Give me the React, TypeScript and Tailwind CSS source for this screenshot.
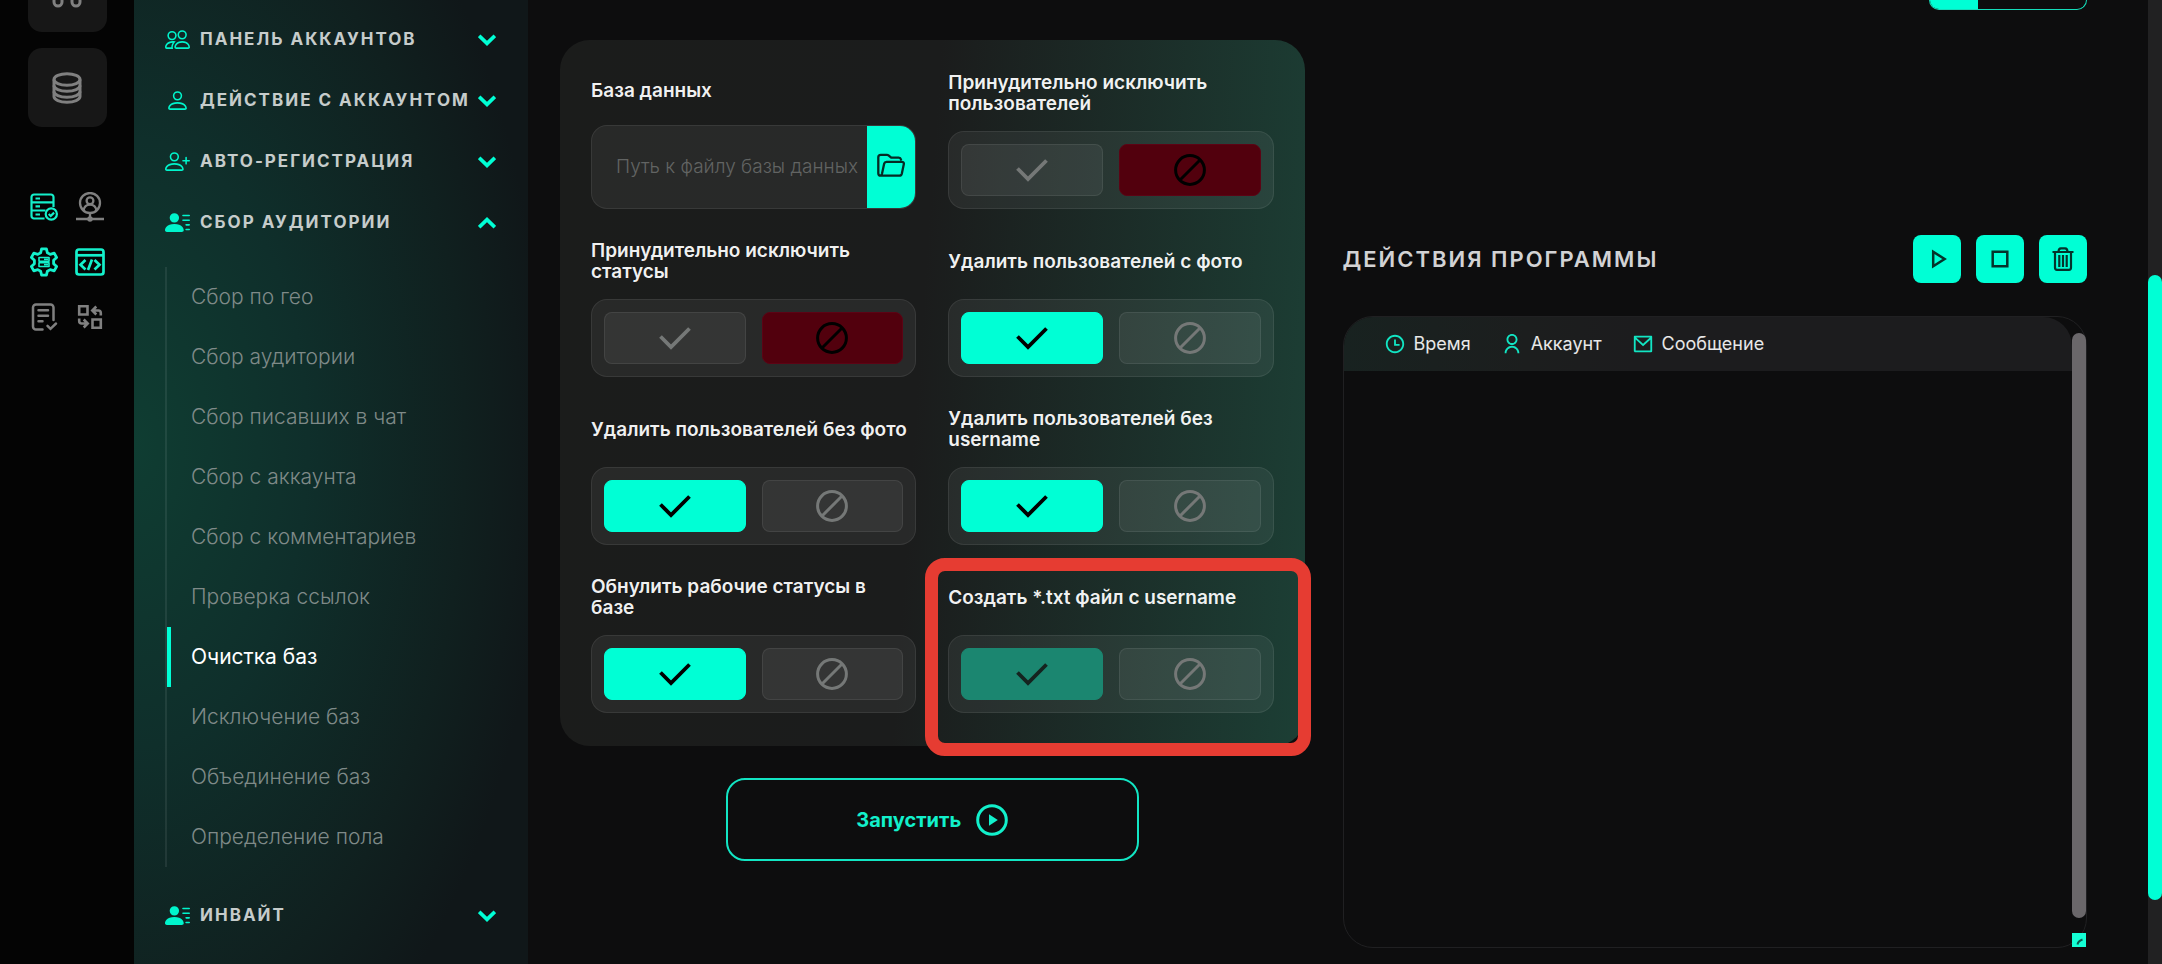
import { useState } from 'react';
import type { ReactNode } from 'react';
import { BsPeople, BsPerson, BsPersonLinesFill, BsPersonPlus } from 'react-icons/bs';
import { RiMailLine, RiTimeLine, RiUserLine } from 'react-icons/ri';
import clsx from 'clsx';

type ToggleState = 'yes' | 'no';

interface FieldItem {
  id: string;
  label: string;
  value: ToggleState;
  muted?: boolean;
}

const AUDIENCE_LINKS = [
  'Сбор по гео',
  'Сбор аудитории',
  'Сбор писавших в чат',
  'Сбор с аккаунта',
  'Сбор с комментариев',
  'Проверка ссылок',
  'Очистка баз',
  'Исключение баз',
  'Объединение баз',
  'Определение пола',
];

const FIELDS: FieldItem[] = [
  { id: 'exclude-users', label: 'Принудительно исключить\nпользователей', value: 'no' },
  { id: 'exclude-statuses', label: 'Принудительно исключить\nстатусы', value: 'no' },
  { id: 'with-photo', label: 'Удалить пользователей с фото', value: 'yes' },
  { id: 'no-photo', label: 'Удалить пользователей без фото', value: 'yes' },
  { id: 'no-username', label: 'Удалить пользователей без\nusername', value: 'yes' },
  { id: 'reset-statuses', label: 'Обнулить рабочие статусы в\nбазе', value: 'yes' },
  { id: 'txt-file', label: 'Создать *.txt файл с username', value: 'yes', muted: true },
];

/* ---------- icons ---------- */

function CheckIcon() {
  return (
    <svg viewBox="0 0 32 24" className="h-6 w-8" fill="none" stroke="currentColor" strokeWidth="3.8">
      <path d="M1.5 10.5 12 21 30.5 2.5" />
    </svg>
  );
}

function BanIcon() {
  return (
    <svg viewBox="0 0 32 32" className="size-8" fill="none" stroke="currentColor" strokeWidth="3">
      <circle cx="16" cy="16" r="14.4" />
      <path d="M6 26 26 6" />
    </svg>
  );
}

function Chevron({ up }: { up?: boolean }) {
  return (
    <svg viewBox="0 0 18 12" className="h-3 w-[18px] shrink-0 text-[#00ffd5]" fill="none" stroke="currentColor" strokeWidth="3.6">
      <path d={up ? 'M1.2 10.2 9 2.6l7.8 7.6' : 'M1.2 1.8 9 9.4l7.8-7.6'} />
    </svg>
  );
}

function DatabaseIcon() {
  return (
    <svg viewBox="0 0 30 32" className="h-8 w-[30px]" fill="none" stroke="currentColor" strokeWidth="3">
      <ellipse cx="15" cy="7.5" rx="13" ry="5.7" />
      <path d="M2 7.500v17c0 3.200 5.800 5.700 13 5.700s13-2.500 13-5.700v-17" />
      <path d="M2 13.500c0 3.200 5.800 5.700 13 5.700s13-2.500 13-5.700M2 19.500c0 3.200 5.800 5.700 13 5.700s13-2.500 13-5.700" />
    </svg>
  );
}

function ServerCheckIcon() {
  return (
    <svg viewBox="0 0 28 28" className="size-7" fill="none" stroke="currentColor" strokeWidth="2.200">
      <path d="M14.500 25.500H4a2.500 2.500 0 0 1-2.500-2.500V4A2.500 2.500 0 0 1 4 1.500h17A2.500 2.500 0 0 1 23.500 4v10" />
      <path d="M1.500 9.300h22M1.500 17.500h14" />
      <path d="M5.500 5.500H10M5.500 13.400H10M5.500 21.500H10" strokeWidth="2.200" />
      <circle cx="21.300" cy="21" r="5.600" />
      <path d="m18.700 21 2 2 3.400-3.400" />
    </svg>
  );
}

function NetworkUserIcon() {
  return (
    <svg viewBox="0 0 30 30" className="size-[30px]" fill="none" stroke="currentColor" strokeWidth="2.300">
      <circle cx="15" cy="11" r="10" />
      <circle cx="15" cy="8.800" r="3.400" />
      <path d="M8.500 18.400c.6-3.600 3.300-5.800 6.500-5.800s5.900 2.200 6.500 5.800M15 21v4.500M1 27h28" />
      <circle cx="15" cy="27" r="1.600" fill="currentColor" />
    </svg>
  );
}

function GearIcon() {
  return (
    <svg viewBox="0 0 28 30" className="h-[30px] w-7" fill="none" stroke="currentColor" strokeWidth="2.800" strokeLinejoin="round">
      <path d="M11.600 1.800h4.800l1 4 2.800 1.600 4-1.200 2.400 4.200-3 2.900v3.400l3 2.900-2.400 4.200-4-1.200-2.800 1.600-1 4h-4.800l-1-4-2.800-1.600-4 1.200-2.400-4.200 3-2.900v-3.400l-3-2.900 2.400-4.200 4 1.200 2.800-1.600z" />
      <path d="M9 10.500h10v3.800H9zM9 15.700h10v3.800H9z" strokeWidth="1.600" />
      <path d="M14 12.400h4M14 17.600h4" strokeWidth="1.600" />
    </svg>
  );
}

function CodeWindowIcon() {
  return (
    <svg viewBox="0 0 30 28" className="h-7 w-[30px]" fill="none" stroke="currentColor" strokeWidth="2.700">
      <rect x="1.500" y="1.500" width="27" height="25" rx="2.500" />
      <path d="M1.500 7.300h27" />
      <path d="m10.500 12-5 4.700 5 4.700M19.500 12l5 4.700-5 4.700M17 11.500l-4 10.500" />
    </svg>
  );
}

function DocCheckIcon() {
  return (
    <svg viewBox="0 0 28 28" className="size-7" fill="none" stroke="currentColor" strokeWidth="2.500" strokeLinecap="round">
      <path d="M12.500 26.500H6A3 3 0 0 1 3 23.500V4.500a3 3 0 0 1 3-3h14.500a3 3 0 0 1 3 3V17" />
      <path d="M8.500 7.300h9.500M8.500 12.800h9.500M8.500 18.300h4M17.500 22.800l3 3 5.500-5.300" />
    </svg>
  );
}

function SwapIcon() {
  return (
    <svg viewBox="0 0 28 28" className="size-7" fill="none" stroke="currentColor" strokeWidth="2.600">
      <path d="M3.200 3.200h8.300v8.300H3.200zM16.500 16.500h8.300v8.300h-8.300z" />
      <path d="M24.800 12.500V10a2.500 2.500 0 0 0-2.500-2.500h-5M20.300 3.500l-4 4 4 4M3.200 15.500V18a2.500 2.500 0 0 0 2.500 2.500h5M7.700 16.500l4 4-4 4" />
    </svg>
  );
}

function FolderIcon() {
  return (
    <svg viewBox="0 0 28 24" className="mb-1 h-6 w-7" fill="none" stroke="currentColor" strokeWidth="2.300" strokeLinejoin="round" strokeLinecap="round">
      <path d="M24 6.500c-.3-1.200-1-1.800-2.300-1.800h-7.500l-2.700-2.300c-.5-.4-1-.6-1.600-.6H3.800C2.300 1.800 1.300 2.800 1.300 4.200v16c0 1.600 1 2.500 2.500 2.500h18.500c1.400 0 2.200-.8 2.500-2l2-9.400c.3-1.500-.5-2.500-2-2.500H9.500c-1.300 0-2 .6-2.300 1.800L5 20.800c-.3 1.200-.8 1.900-1.700 1.900" />
    </svg>
  );
}

function TrashIcon() {
  return (
    <svg viewBox="0 0 22 24" className="h-6 w-[22px]" fill="none" stroke="currentColor" strokeWidth="2.200">
      <path d="M0.500 5h21M6.500 5c0-2.400.8-3.600 2.400-3.600h4.200c1.600 0 2.400 1.200 2.400 3.600M3 5v15.500C3 22 3.800 22.800 5 22.800h12c1.200 0 2-.8 2-2.300V5" />
      <path d="M7.300 8v12M11 8v12M14.700 8v12" />
    </svg>
  );
}

/* ---------- building blocks ---------- */

function MenuGroup({ icon, title, open }: { icon: ReactNode; title: string; open?: boolean }) {
  return (
    <button
      type="button"
      aria-expanded={!!open}
      className="flex h-[61px] w-full items-center justify-between pl-[31px] pr-8 text-left"
    >
      <span className="flex items-center gap-2.5">
        <span className="flex w-[25px] shrink-0 justify-center text-[25px] text-[#00f5cc]">{icon}</span>
        <span className="whitespace-nowrap text-[17px] font-bold tracking-[2px] text-[#c6cccb]">{title}</span>
      </span>
      <Chevron up={open} />
    </button>
  );
}

function Toggle({ field }: { field: FieldItem }) {
  const [value, setValue] = useState<ToggleState>(field.value);
  const yes = value === 'yes';

  return (
    <div
      role="group"
      aria-labelledby={field.id}
      className="grid h-[78px] grid-cols-2 gap-4 rounded-2xl border border-white/8 bg-white/6 p-3"
    >
      <button
        type="button"
        aria-label="Да"
        aria-pressed={yes}
        onClick={() => setValue('yes')}
        className={clsx(
          'flex items-center justify-center rounded-lg border',
          yes && !field.muted && 'border-[#00ffd5] bg-[#00ffd5] text-black',
          yes && field.muted && 'border-[#1b8670] bg-[#1b8670] text-[#15231f]',
          !yes && 'border-white/8 bg-white/6 text-[#757877]',
        )}
      >
        <CheckIcon />
      </button>
      <button
        type="button"
        aria-label="Нет"
        aria-pressed={!yes}
        onClick={() => setValue('no')}
        className={clsx(
          'flex items-center justify-center rounded-lg border',
          yes ? 'border-white/8 bg-white/6 text-[#757877]' : 'border-[#5c0314] bg-[#52000d] text-black',
        )}
      >
        <BanIcon />
      </button>
    </div>
  );
}

function Field({ field }: { field: FieldItem }) {
  return (
    <div className="relative flex flex-col gap-[17px]">
      <div id={field.id} className="flex flex-1 items-center whitespace-pre-line text-[19px]/[21px] font-semibold text-white/95">
        {field.label}
      </div>
      <Toggle field={field} />
      {field.muted && (
        <div className="pointer-events-none absolute -bottom-[43px] -left-[23px] -right-[37px] -top-[18px] rounded-[20px] border-[13px] border-[#e63c32]" />
      )}
    </div>
  );
}

function DatabaseField() {
  return (
    <div className="flex flex-col gap-[17px]">
      <label htmlFor="db-path" className="flex flex-1 items-center text-[19px]/[21px] font-semibold text-white/95">
        База данных
      </label>
      <div className="flex h-[84px] overflow-hidden rounded-2xl border border-white/8 bg-white/6">
        <input
          id="db-path"
          type="text"
          placeholder="Путь к файлу базы данных"
          className="min-w-0 flex-1 bg-transparent pl-6 text-[19px] font-light text-white outline-none placeholder:text-[#626463]"
        />
        <button type="button" aria-label="Открыть файл" className="flex w-12 items-center justify-center bg-[#00ffd5] text-[#062b24]">
          <FolderIcon />
        </button>
      </div>
    </div>
  );
}

/* ---------- sections ---------- */

function Rail() {
  return (
    <aside className="flex w-[134px] shrink-0 flex-col items-center bg-[#040404] text-[#808080]">
      <button type="button" aria-label="Аккаунты" className="flex h-8 w-[79px] justify-center rounded-b-[14px] bg-[#171717]">
        <svg viewBox="0 0 30 8" className="h-2 w-[30px]" fill="none" stroke="currentColor" strokeWidth="3">
          <path d="M2 0v2a4 4 0 0 0 8 0V0M20 0v2a4 4 0 0 0 8 0V0" />
        </svg>
      </button>
      <button type="button" aria-label="Базы" className="mt-4 flex size-[79px] items-center justify-center rounded-[14px] bg-[#171717]">
        <DatabaseIcon />
      </button>
      <div className="mt-[65px] grid grid-cols-2 gap-x-4 gap-y-[25px]">
        {[
          { icon: <ServerCheckIcon />, label: 'Серверы', active: true },
          { icon: <NetworkUserIcon />, label: 'Прокси' },
          { icon: <GearIcon />, label: 'Настройки', active: true },
          { icon: <CodeWindowIcon />, label: 'Код', active: true },
          { icon: <DocCheckIcon />, label: 'Отчёты' },
          { icon: <SwapIcon />, label: 'Обмен' },
        ].map((item) => (
          <button
            key={item.label}
            type="button"
            aria-label={item.label}
            className={clsx('flex size-[30px] items-center justify-center', item.active && 'text-[#14f0cb]')}
          >
            {item.icon}
          </button>
        ))}
      </div>
    </aside>
  );
}

function Sidebar() {
  return (
    <nav className="w-[394px] shrink-0 bg-[#101719] bg-[radial-gradient(ellipse_105%_75%_at_0%_46%,#0f3d32_0%,#0f2f2b_42%,#10201f_80%,#101719_100%)] pb-4 pt-[9px]">
      <MenuGroup icon={<BsPeople />} title="ПАНЕЛЬ АККАУНТОВ" />
      <MenuGroup icon={<BsPerson />} title="ДЕЙСТВИЕ С АККАУНТОМ" />
      <MenuGroup icon={<BsPersonPlus />} title="АВТО-РЕГИСТРАЦИЯ" />
      <MenuGroup icon={<BsPersonLinesFill />} title="СБОР АУДИТОРИИ" open />
      <ul className="mb-[18px] ml-[31px] mt-[14px] border-l-2 border-white/8">
        {AUDIENCE_LINKS.map((title) => (
          <li key={title}>
            <a
              href="#"
              className={clsx(
                'flex h-[60px] items-center border-l-4 pl-5 text-[21px]',
                title === 'Очистка баз' ? 'border-[#00ffd5] text-white' : 'border-transparent font-light text-[#7f8a88]',
              )}
            >
              {title}
            </a>
          </li>
        ))}
      </ul>
      <MenuGroup icon={<BsPersonLinesFill />} title="ИНВАЙТ" />
    </nav>
  );
}

function SettingsCard() {
  return (
    <section className="flex flex-col items-center pt-10">
      <div className="grid w-full grid-cols-2 gap-x-8 gap-y-[31px] rounded-[30px] bg-[linear-gradient(94deg,#1b1c1b_0%,#1b1c1c_48%,#1c3f35_100%)] px-[31px] pb-[33px] pt-8">
        <DatabaseField />
        {FIELDS.map((field) => (
          <Field key={field.id} field={field} />
        ))}
      </div>
      <button
        type="button"
        className="mt-8 flex h-[83px] w-[413px] items-center justify-center gap-[15px] rounded-[19px] border-2 border-[#12e5c3] text-xl font-bold text-[#12f0cb]"
      >
        Запустить
        <svg viewBox="0 0 32 32" className="size-8">
          <circle cx="16" cy="16" r="14.300" fill="none" stroke="currentColor" strokeWidth="3" />
          <path d="M13 10.300v11.400l8.800-5.700z" fill="currentColor" />
        </svg>
      </button>
    </section>
  );
}

function ActionLog() {
  return (
    <section className="flex flex-col pb-4">
      <div className="flex h-2.5 w-[158px] self-end overflow-hidden rounded-b-[10px] border border-t-0 border-[#14dcb9]">
        <div className="w-12 bg-[#00ffd5]" />
      </div>
      <div className="mt-[225px] flex items-center justify-between">
        <h2 className="text-[22px] font-semibold tracking-[2px] text-[#d2d2d4]">ДЕЙСТВИЯ ПРОГРАММЫ</h2>
        <div className="flex gap-[15px] text-[#04332b]">
          <button type="button" aria-label="Запустить" className="flex size-12 items-center justify-center rounded-lg bg-[#00ffd5]">
            <svg viewBox="0 0 18 20" className="ml-1 h-5 w-[18px]" fill="none" stroke="currentColor" strokeWidth="2.500">
              <path d="M3.200 2.800v14.400L14.600 10z" />
            </svg>
          </button>
          <button type="button" aria-label="Остановить" className="flex size-12 items-center justify-center rounded-lg bg-[#00ffd5]">
            <svg viewBox="0 0 18 18" className="size-[18px]" fill="none" stroke="currentColor" strokeWidth="2.500">
              <path d="M1.700 1.700h14.600v14.600H1.700z" />
            </svg>
          </button>
          <button type="button" aria-label="Очистить" className="flex size-12 items-center justify-center rounded-lg bg-[#00ffd5]">
            <TrashIcon />
          </button>
        </div>
      </div>

      <div className="mt-[33px] flex flex-1 rounded-[30px] border border-[#202022]">
        <div className="flex-1">
          <div className="rounded-t-[29px] bg-[linear-gradient(90deg,#182220_0%,#1c1e1e_25%,#1c1c1e_40%)] pl-10">
            <table>
              <thead>
                <tr className="h-[54px] text-lg text-white/90">
                  <th className="pr-[30px] font-normal">
                    <span className="flex items-center gap-2"><RiTimeLine className="size-[22px] text-[#12e5c3]" />Время</span>
                  </th>
                  <th className="pr-[30px] font-normal">
                    <span className="flex items-center gap-2"><RiUserLine className="size-[22px] text-[#12e5c3]" />Аккаунт</span>
                  </th>
                  <th className="font-normal">
                    <span className="flex items-center gap-2"><RiMailLine className="size-[22px] text-[#12e5c3]" />Сообщение</span>
                  </th>
                </tr>
              </thead>
            </table>
          </div>
        </div>
        <div className="flex w-3.5 flex-col pt-4">
          <div className="flex-1 rounded-full bg-[#6a676a]" />
          <svg viewBox="0 0 14 14" className="mt-[15px] size-3.5 bg-[#14ffd5]" fill="none" stroke="#0a5c4e" strokeWidth="2">
            <path d="M5.500 11.500c.5-2.500 2-4 5-5" />
          </svg>
        </div>
      </div>
    </section>
  );
}

export default function App() {
  return (
    <div className="flex min-h-screen bg-[#0d0d0e] font-['Inter','Liberation_Sans',sans-serif]">
      <Rail />
      <Sidebar />
      <main className="grid flex-1 grid-cols-2 gap-[38px] pl-8 pr-[61px]">
        <SettingsCard />
        <ActionLog />
      </main>
      <div className="w-3.5 shrink-0 bg-[#212122] pb-16 pt-[275px]">
        <div className="h-full rounded-full bg-[#00ffd5]" />
      </div>
    </div>
  );
}
